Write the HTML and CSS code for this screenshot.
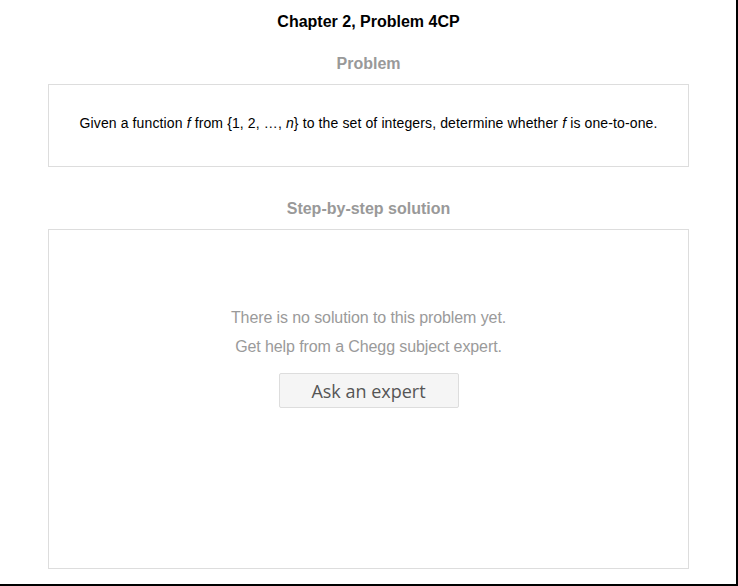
FILE: index.html
```html
<!DOCTYPE html>
<html>
<head>
<meta charset="utf-8">
<link rel="stylesheet" href="styles.css">
</head>
<body>
<div class="frame">
  <h1 class="title">Chapter 2, Problem 4CP</h1>
  <h2 class="section-head">Problem</h2>
  <div class="box problem-box">
    <p class="problem-text">Given a function <i>f</i> from {1, 2, …, <i>n</i>} to the set of integers, determine whether <i>f</i> is one-to-one.</p>
  </div>
  <h2 class="section-head solution-head">Step-by-step solution</h2>
  <div class="box solution-box">
    <p class="empty-line">There is no solution to this problem yet.</p>
    <p class="empty-line">Get help from a Chegg subject expert.</p>
    <button class="ask-btn">Ask an expert</button>
  </div>
</div>
</body>
</html>
```
FILE: styles.css
```css
html, body {
  margin: 0;
  padding: 0;
  background: #fff;
}
.frame {
  box-sizing: border-box;
  width: 738px;
  height: 586px;
  border-right: 2px solid #000;
  border-bottom: 2px solid #000;
  font-family: "Liberation Sans", Arial, sans-serif;
  display: flex;
  flex-direction: column;
  align-items: stretch;
  padding: 0 47px 0 48px;
}
.title {
  margin: 12px 0 0;
  font-size: 16px;
  line-height: 19px;
  font-weight: bold;
  color: #000;
  text-align: center;
}
.section-head {
  margin: 23px 0 0;
  font-size: 16px;
  line-height: 19px;
  font-weight: bold;
  color: #999;
  text-align: center;
}
.solution-head {
  margin-top: 32px;
}
.box {
  border: 1px solid #ddd;
  margin-top: 11px;
}
.problem-box {
  box-sizing: border-box;
  height: 83px;
  display: flex;
  align-items: center;
  justify-content: center;
  padding-bottom: 5px;
}
.problem-text {
  margin: 0;
  font-size: 14px;
  line-height: 16px;
  letter-spacing: 0.12px;
  color: #000;
}
.solution-box {
  display: flex;
  flex-direction: column;
  align-items: center;
  padding-top: 78px;
  box-sizing: border-box;
  height: 340px;
}
.empty-line {
  margin: 0 0 10px;
  font-size: 16px;
  line-height: 19px;
  letter-spacing: -0.1px;
  color: #9a9a9a;
}
.ask-btn {
  margin-top: 7px;
  width: 180px;
  height: 35px;
  background: #f5f5f5;
  border: 1px solid #ddd;
  border-radius: 2px;
  font-family: "Open Sans", "Noto Sans", sans-serif;
  font-size: 18px;
  color: #555;
  padding: 0;
}
```
